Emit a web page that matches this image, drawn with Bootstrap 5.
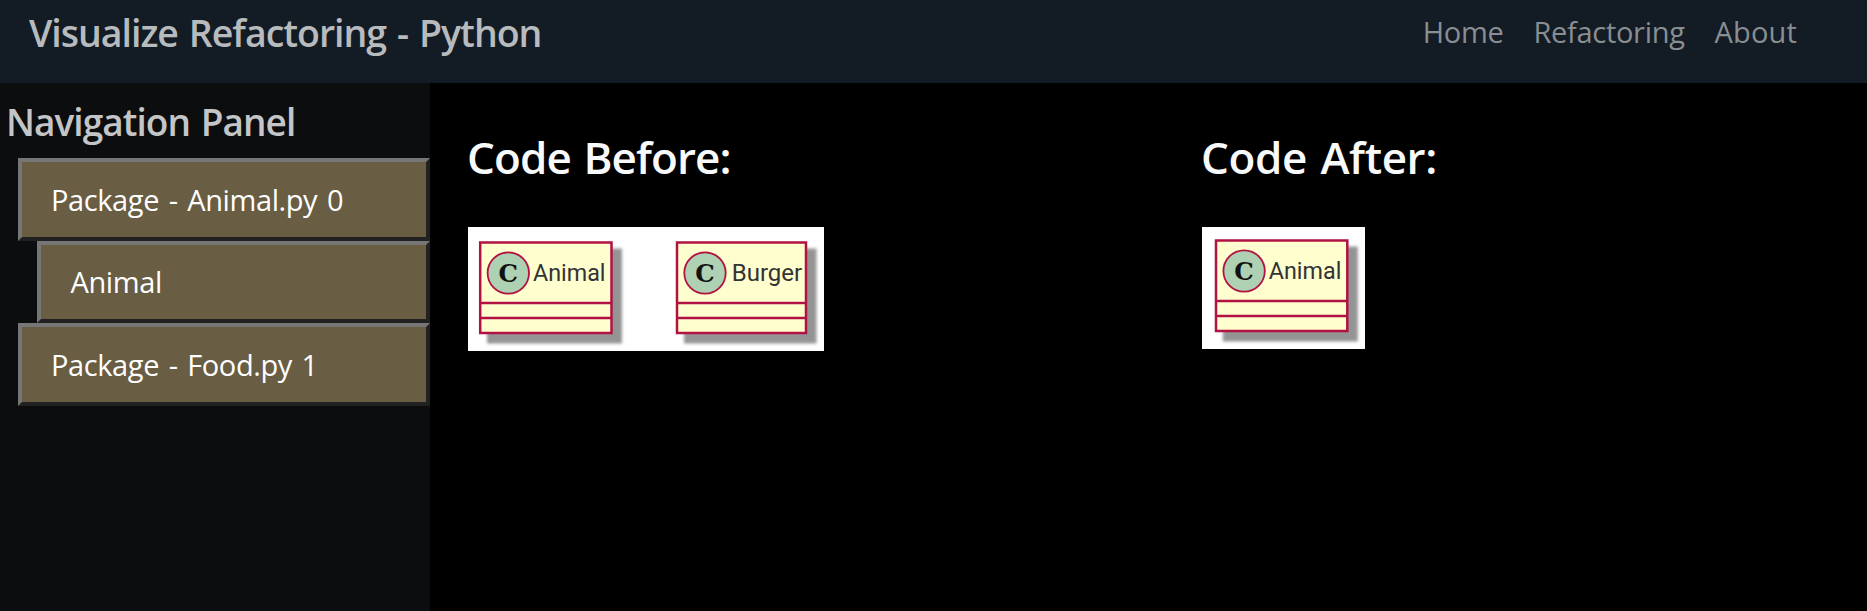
<!DOCTYPE html>
<html lang="en">
<head>
<meta charset="utf-8">
<meta name="viewport" content="width=device-width, initial-scale=1">
<title>Visualize Refactoring - Python</title>
<link href="https://cdn.jsdelivr.net/npm/bootstrap@5.3.0/dist/css/bootstrap.min.css" rel="stylesheet">
<style>
body{background:#000;font-family:"Open Sans","Noto Sans",sans-serif;font-size:29px;overflow:hidden}
.topbar{height:83px;background:#131c25;padding:0 70px 0 29px}
.topbar h1{font-size:37.5px;line-height:50px;padding-top:8px;font-weight:600;color:#b8bbbe;letter-spacing:-1.02px;word-spacing:2.2px}
.toplinks{gap:30px;padding-top:11px}
.toplinks a{color:#898e92;line-height:42px;padding:0;letter-spacing:-.3px}
.toplinks a:last-child{letter-spacing:.15px}
.sidepanel{width:430px;background:#0c0d0e}
.sidepanel h2{font-size:37px;line-height:50px;font-weight:600;color:#c4c5c6;letter-spacing:-.95px;word-spacing:2px;margin:14px 0 11px;padding-left:6px}
.treebtn{display:block;height:83px;margin-left:18px;padding:0 0 0 29px;text-align:left;color:#fff;background:#695d43;border:4px solid;border-color:#767676 #212121 #212121 #767676;letter-spacing:-.4px;word-spacing:2.5px}
.treebtn.child{margin-left:37px;height:82px;padding-left:29.5px}
.codeview{padding:46px 0 0 38px}
.pane{flex:0 0 734px}
.pane h2{font-size:44px;line-height:56px;font-weight:600;color:#f8f9fa;margin:0 0 42px -1px;letter-spacing:-.9px;word-spacing:2px}
.pane:last-child h2{letter-spacing:-.4px;word-spacing:2.5px}
.uml{display:block;background:#fff}
.uml .frame{fill:#fefece;stroke:#b21243;stroke-width:2.5}
.uml .sep{stroke:#b21243;stroke-width:2.4}
.uml .dot{fill:#add1b2;stroke:#b21243;stroke-width:1.8}
.uml .shade{fill:#949494;filter:url(#soft)}
.uml .cls{font:23px Roboto,sans-serif;fill:#333}
.uml .kind{font:bold 23.5px "DejaVu Serif",serif;fill:#111}
</style>
</head>
<body class="vh-100 d-flex flex-column">
<header class="topbar d-flex justify-content-between align-items-start flex-shrink-0">
  <h1 class="m-0">Visualize Refactoring - Python</h1>
  <nav class="nav toplinks">
    <a class="nav-link" href="#">Home</a>
    <a class="nav-link" href="#">Refactoring</a>
    <a class="nav-link" href="#">About</a>
  </nav>
</header>
<div class="d-flex flex-grow-1">
  <aside class="sidepanel flex-shrink-0">
    <h2>Navigation Panel</h2>
    <div class="d-grid">
      <button class="treebtn">Package - Animal.py 0</button>
      <button class="treebtn child">Animal</button>
      <button class="treebtn">Package - Food.py 1</button>
    </div>
  </aside>
  <main class="codeview d-flex align-items-start">
    <section class="pane">
      <h2>Code Before:</h2>
      <svg class="uml" width="356" height="124">
        <defs><filter id="soft" x="-10%" y="-10%" width="120%" height="120%"><feGaussianBlur stdDeviation="1.5"/></filter></defs>
        <rect class="shade" x="19" y="21.5" width="135" height="95"/>
        <rect class="frame" x="12.2" y="15.5" width="131.3" height="90.5"/>
        <path class="sep" d="M12 76H144M12 91H144"/>
        <circle class="dot" cx="40.3" cy="46" r="20.7"/>
        <text class="kind" x="30.5" y="55" textLength="19.5" lengthAdjust="spacingAndGlyphs">C</text>
        <text class="cls" x="65" y="54.3" textLength="72.5" lengthAdjust="spacingAndGlyphs">Animal</text>
        <rect class="shade" x="216" y="21.5" width="132.500" height="95"/>
        <rect class="frame" x="209" y="15.5" width="129" height="90.5"/>
        <path class="sep" d="M209 76H338M209 91H338"/>
        <circle class="dot" cx="237" cy="46" r="20.7"/>
        <text class="kind" x="227.2" y="55" textLength="19.5" lengthAdjust="spacingAndGlyphs">C</text>
        <text class="cls" x="263.7" y="54.3" textLength="70.5" lengthAdjust="spacingAndGlyphs">Burger</text>
      </svg>
    </section>
    <section class="pane">
      <h2>Code After:</h2>
      <svg class="uml" width="163" height="122">
        <g transform="translate(1.8 -2)">
        <rect class="shade" x="19" y="21.5" width="135" height="95"/>
        <rect class="frame" x="12.2" y="15.5" width="131.3" height="90.5"/>
        <path class="sep" d="M12 76H144M12 91H144"/>
        <circle class="dot" cx="40.3" cy="46" r="20.7"/>
        <text class="kind" x="30.5" y="55" textLength="19.5" lengthAdjust="spacingAndGlyphs">C</text>
        <text class="cls" x="65" y="54.3" textLength="72.5" lengthAdjust="spacingAndGlyphs">Animal</text>
        </g>
      </svg>
    </section>
  </main>
</div>
<script src="https://cdn.jsdelivr.net/npm/bootstrap@5.3.0/dist/js/bootstrap.bundle.min.js"></script>
</body>
</html>
